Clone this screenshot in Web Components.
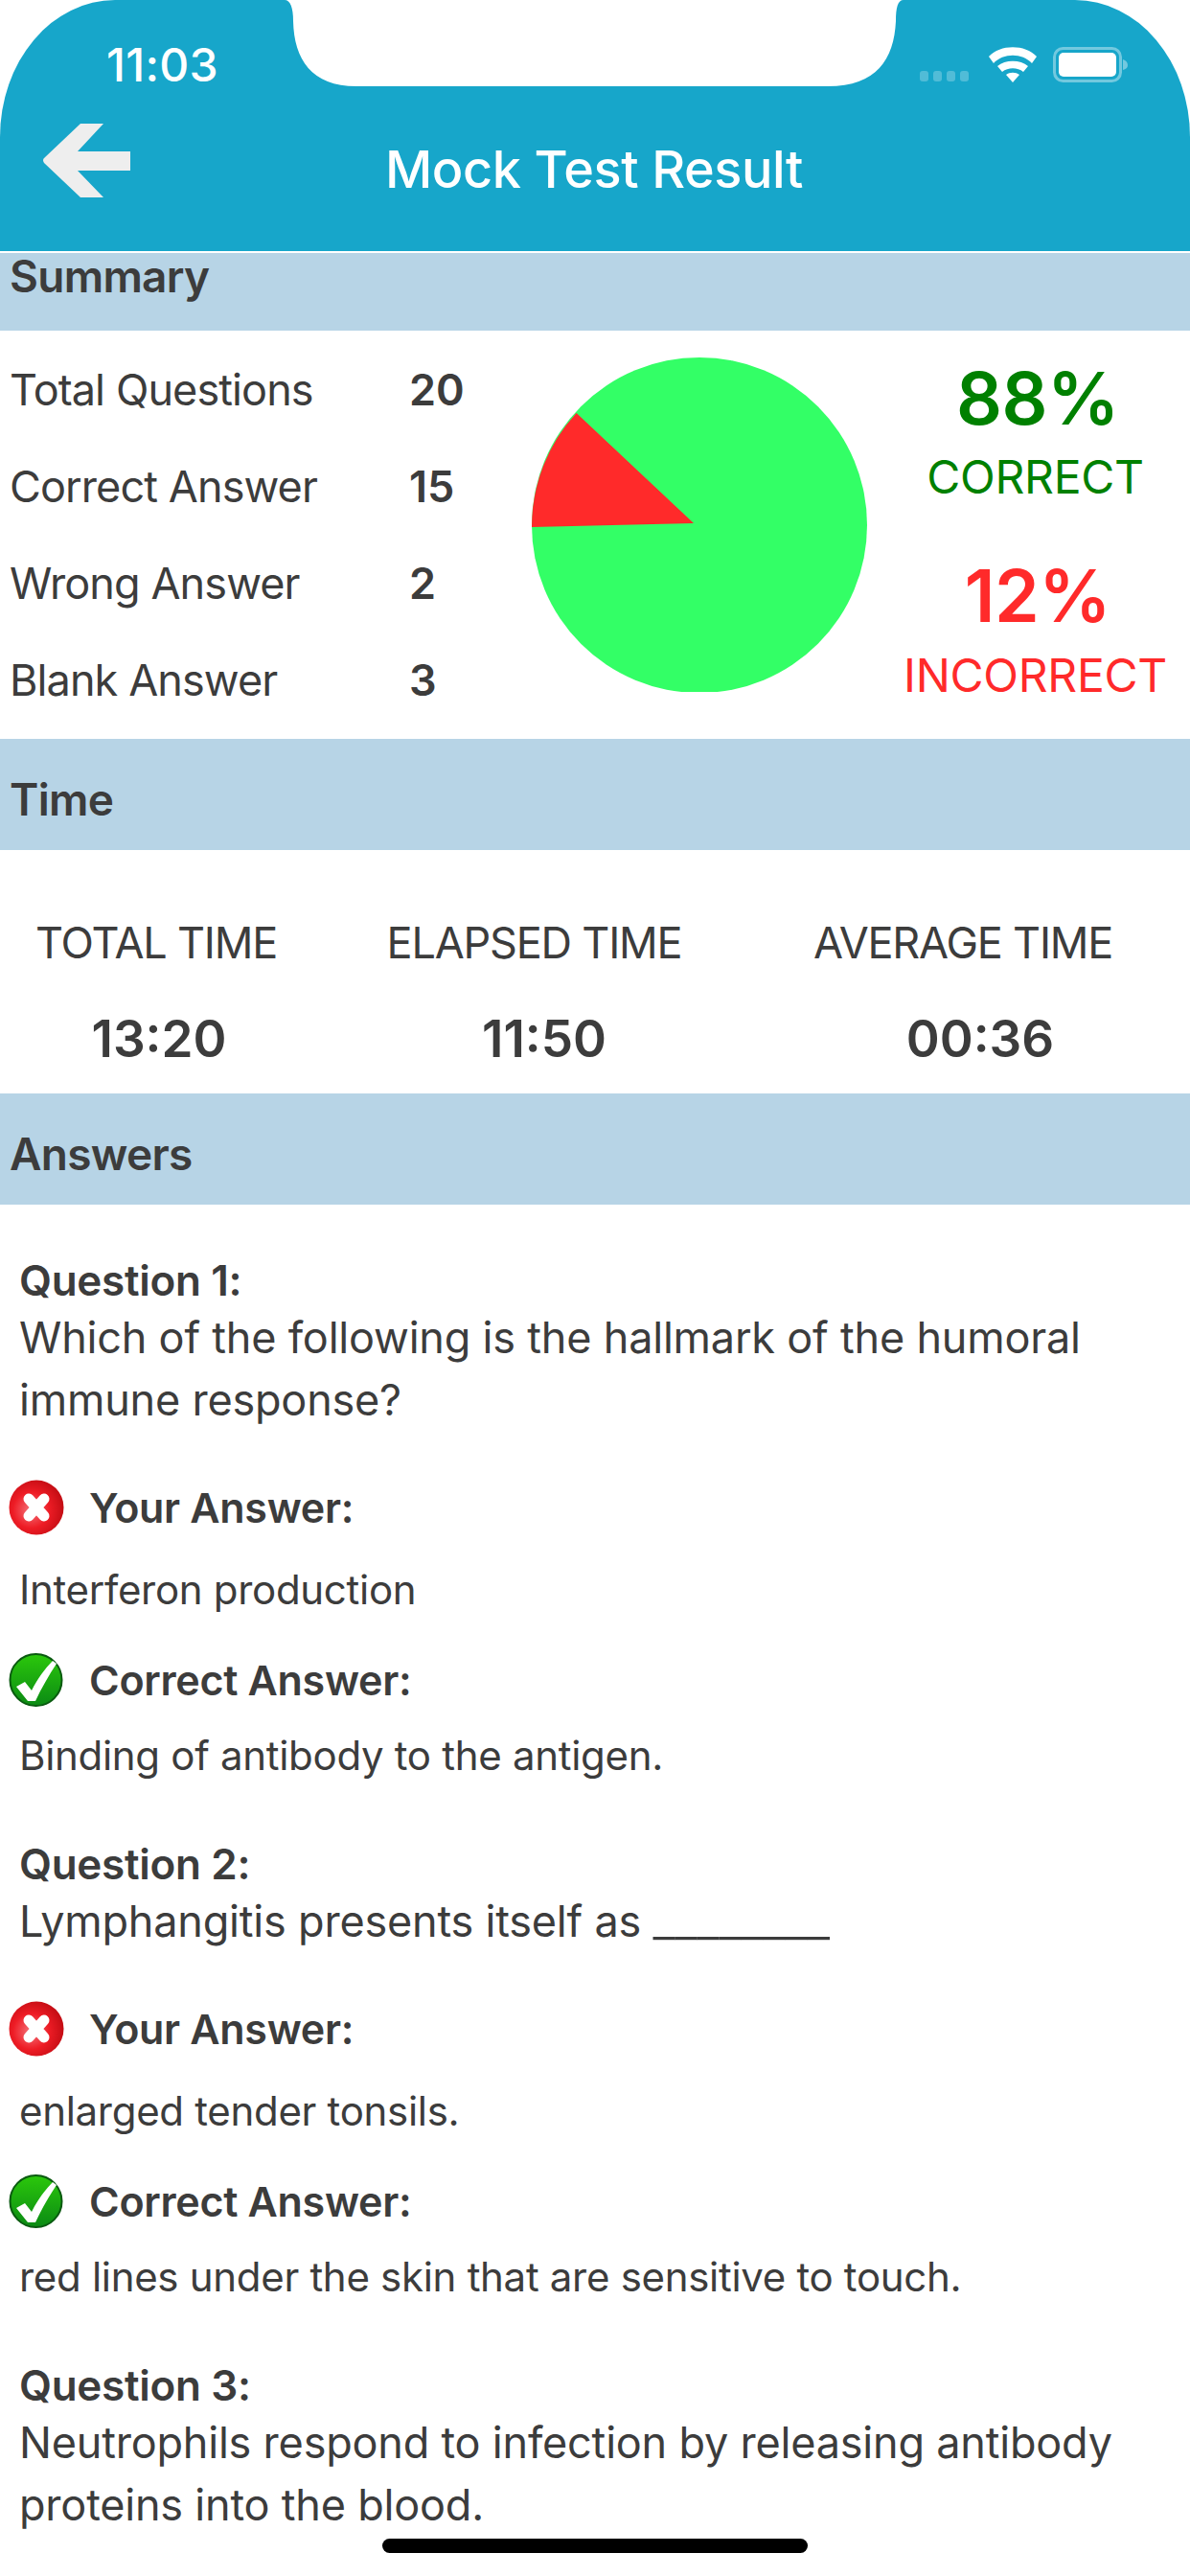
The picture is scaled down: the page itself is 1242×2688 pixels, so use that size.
<!DOCTYPE html>
<html><head><meta charset="utf-8"><style>
html,body{margin:0;padding:0;background:#fff;width:1242px;height:2688px;overflow:hidden;font-family:Inter,"Liberation Sans",sans-serif;color:#3c3c3c}
result-page{display:block;width:1242px;height:2688px;position:relative;overflow:hidden}
</style></head><body>
<result-page>
<app-header title="Mock Test Result" time="11:03"></app-header>
<section-band label="Summary" size="short"></section-band>
<summary-panel></summary-panel>
<section-band label="Time"></section-band>
<time-panel></time-panel>
<section-band label="Answers"></section-band>
<question-item num="1" text="Which of the following is the hallmark of the humoral immune response?" yours="Interferon production" correct="Binding of antibody to the antigen."></question-item>
<question-item num="2" text="Lymphangitis presents itself as <span style='font-size:52px;font-weight:300;line-height:0;letter-spacing:-.25px'>________</span>" yours="enlarged tender tonsils." correct="red lines under the skin that are sensitive to touch."></question-item>
<question-item num="3" text="Neutrophils respond to infection by releasing antibody proteins into the blood."></question-item>
<home-bar></home-bar>
</result-page>
<script>
function def(name,html){customElements.define(name,class extends HTMLElement{connectedCallback(){if(this.shadowRoot)return;const r=this.attachShadow({mode:'open'});r.innerHTML=typeof html==='function'?html(this):html;}});}
const a=(e,n)=>e.getAttribute(n)||'';
def('app-header',e=>`<style>
:host{display:block;position:relative;height:262px;background:#17a6ca;border-radius:120px 120px 0 0/143px 143px 0 0;color:#fff}
.notch{position:absolute;left:297px;top:0}
.time{position:absolute;left:111px;top:43px;font-size:48px;font-weight:500;line-height:50px;letter-spacing:.3px}
.st{position:absolute;left:956px;top:44px}
.row{position:absolute;left:0;right:0;top:150px;height:54px;display:flex;justify-content:center;align-items:center;font-size:54px;font-weight:500;line-height:54px;padding-right:2px;letter-spacing:-.4px}
.back{position:absolute;left:44px;top:128px}
</style>
<svg class="notch" width="646" height="92" viewBox="0 0 646 92"><path d="M0 0H646C640 0 638 8 638 22C636 62 618 90 567 90H75C28 90 10 62 9 22C9 8 6 0 0 0Z" fill="#fff"/></svg>
<span class="time">${a(e,'time')}</span>
<svg class="st" width="230" height="46" viewBox="0 0 230 46"><g fill="#fff" fill-opacity=".25"><rect x="4" y="30" width="9" height="11" rx="3"/><rect x="18" y="30" width="9" height="11" rx="3"/><rect x="32" y="30" width="9" height="11" rx="3"/><rect x="46" y="30" width="9" height="11" rx="3"/></g>
<path d="M76 15C88 2 114 2 126 15L121 22C111 11 91 11 81 22Z M85 25C93 18 109 18 117 25L112 31C106 26 96 26 90 31Z M94 34C98 31 104 31 108 34L101 42Z" fill="#fff"/>
<rect x="144.500" y="6.500" width="69" height="34" rx="9" fill="none" stroke="#fff" stroke-opacity=".4" stroke-width="3"/><rect x="149" y="11" width="60" height="25" rx="5" fill="#fff"/><path d="M216 18C219 19 221 21 221 24S219 28 216 29Z" fill="#fff" fill-opacity=".4"/></svg>
<svg class="back" width="94" height="80" viewBox="0 0 94 80"><path d="M40 1H64L37 30H92V50H37L64 78H40L2 42Q0 39 2 37Z" fill="#eeeeee"/></svg>
<div class="row">${a(e,'title')}</div>`);
def('section-band',e=>`<style>
:host{display:block;height:${a(e,'size')?'81px':'116px'};margin-top:${a(e,'size')?'2px':'0'};background:#b7d4e6;color:#3c3c3c}
div{padding:${a(e,'size')?'0':'36px'} 10px 0;font-size:46px;font-weight:600;line-height:${a(e,'size')?'48px':'54px'};letter-spacing:-.7px}
</style><div>${a(e,'label')}</div>`);
def('summary-panel',`<style>
:host{display:flex;height:426px;box-sizing:border-box;position:relative}
.stats{width:555px;padding-top:35px;box-sizing:border-box}
.r{display:flex;height:101px;font-size:45px;line-height:54px;letter-spacing:-.9px}
.r span:first-child{width:427px;padding-left:10px;box-sizing:border-box}
.r b{font-weight:600;letter-spacing:0}
svg{margin-top:27px;flex:none}
.res{flex:1;text-align:center;color:#008000;padding-left:14px}
.p{font-size:75px;font-weight:600;line-height:80px;margin-top:31px;padding-left:5px;letter-spacing:-.5px}
.l{font-size:48px;line-height:54px;letter-spacing:-.3px;white-space:nowrap;margin-top:15px}
.red{color:#ff2a2a}.p.red{margin-top:57px}.l.red{margin-top:16px}
</style>
<div class="stats">
<div class="r"><span>Total Questions</span><b>20</b></div>
<div class="r"><span>Correct Answer</span><b>15</b></div>
<div class="r"><span>Wrong Answer</span><b>2</b></div>
<div class="r"><span>Blank Answer</span><b>3</b></div>
</div>
<svg width="350" height="350" viewBox="0 0 350 350"><circle cx="175" cy="176" r="175" fill="#33ff66"/><path d="M169 174L46.600 59A175 175 0 0 0 0 178Z" fill="#ff2a2a"/></svg>
<div class="res"><div class="p">88%</div><div class="l">CORRECT</div><div class="p red">12%</div><div class="l red">INCORRECT</div></div>`);
def('time-panel',`<style>
:host{display:grid;grid-template-columns:332px 472px 1fr;height:254px;box-sizing:border-box;padding-top:70px;text-align:center}
.t{font-size:45px;line-height:54px;letter-spacing:-1.2px}
.v{font-size:53px;font-weight:600;line-height:60px;margin-top:43px}
</style>
<div><div class="t" style="padding-right:6px">TOTAL TIME</div><div class="v">13:20</div></div>
<div><div class="t" style="padding-right:21px">ELAPSED TIME</div><div class="v">11:50</div></div>
<div><div class="t" style="padding-right:36px">AVERAGE TIME</div><div class="v">00:36</div></div>`);
def('answer-row',e=>`<style>
:host{display:block}
.h{display:flex;align-items:center;gap:26px;padding-left:9px;height:60px;font-size:43px;font-weight:600;letter-spacing:-.3px}
.a{padding:0 0 0 20px;font-size:42px;line-height:56px;margin-top:${a(e,'gap')};letter-spacing:-.3px}
</style><div class="h"><slot name="icon"></slot><span>${a(e,'label')}</span></div><div class="a">${a(e,'text')}</div>`);
const X=`<svg slot="icon" width="58" height="58" viewBox="0 0 58 58"><defs><radialGradient id="x" cx=".4" cy=".55" r=".6"><stop offset="0" stop-color="#f4757c"/><stop offset=".55" stop-color="#ee1c25"/><stop offset="1" stop-color="#c40d14"/></radialGradient></defs><circle cx="29" cy="29" r="28.500" fill="url(#x)"/><path d="M21 20L37 38M37 20L21 38" stroke="#fff" stroke-width="11" stroke-linecap="round"/></svg>`;
const C=`<svg slot="icon" width="58" height="58" viewBox="0 0 58 58"><defs><linearGradient id="c" x1="0" y1="0" x2="0" y2="1"><stop offset="0" stop-color="#2bc80b"/><stop offset="1" stop-color="#0b8a14"/></linearGradient></defs><circle cx="28.500" cy="29" r="27" fill="url(#c)" stroke="#0a5a10" stroke-width="2"/><path d="M8 36L17 31L24 40C30 28 38 17 46 9L50 12C42 24 34 38 28 51H20Z" fill="#fff"/></svg>`;
def('question-item',e=>{const y=a(e,'yours');return `<style>
:host{display:block;padding:${a(e,'num')==='1'?'54px':'60px'} 0 0}
.q{padding:0 20px;font-size:45px;line-height:65px;letter-spacing:-.2px}
.q b{display:block;font-size:44px;font-weight:600;line-height:50px;letter-spacing:-.3px;margin-bottom:2px}
.ans{margin-top:50px;display:flex;flex-direction:column;gap:36px}
</style><div class="q"><b>Question ${a(e,'num')}:</b>${a(e,'text')}</div>
${y?`<div class="ans"><answer-row gap="28px" label="Your Answer:" text="${y}">${X}</answer-row><answer-row gap="21px" label="Correct Answer:" text="${a(e,'correct')}">${C}</answer-row></div>`:''}`});
def('home-bar',`<style>:host{display:block;position:absolute;left:399px;bottom:24px;width:444px;height:15px;border-radius:8px;background:#000}</style>`);
</script>
</body></html>
